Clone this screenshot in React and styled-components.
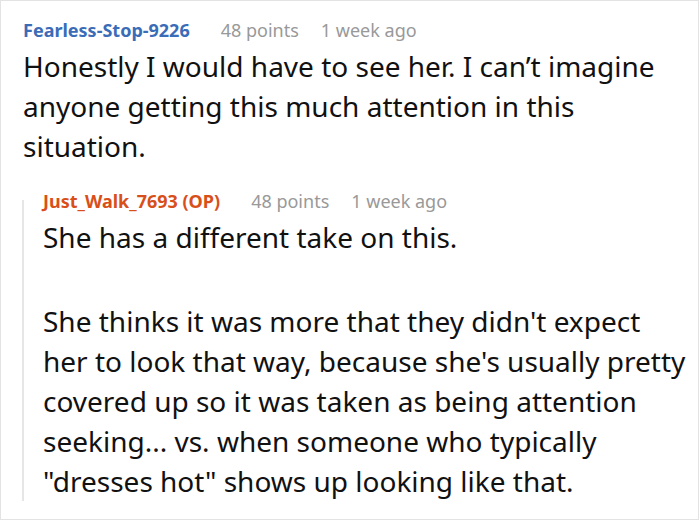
import styled, { createGlobalStyle } from "styled-components";

const GlobalStyle = createGlobalStyle`
  html, body {
    margin: 0;
    padding: 0;
    background: #fff;
  }
  * {
    box-sizing: border-box;
  }
`;

const Frame = styled.div`
  width: 699px;
  height: 520px;
  border: 1px solid #e3e3e3;
  padding: 17px 10px 0 22px;
  overflow: hidden;
  font-family: "Noto Sans", "Open Sans", sans-serif;
  background: #fff;
`;

const Comment = styled.div`
  display: flex;
  flex-direction: column;
`;

const Reply = styled.div`
  display: flex;
  flex-direction: column;
  margin-top: 23px;
  margin-left: -1px;
  padding-left: 21px;
  background: linear-gradient(#e6e6e6, #e6e6e6) no-repeat 0 11px / 2px calc(100% - 11px);
`;

const Meta = styled.div`
  display: flex;
  align-items: baseline;
  gap: 22px;
  font-size: 18px;
  line-height: 24px;
  color: #999;
  white-space: nowrap;
`;

const Author = styled.span`
  font-weight: 700;
  color: ${(props) => (props.$op ? "#d84f1a" : "#3b6cb7")};
  margin-right: 9px;
`;

const Body = styled.div`
  margin-top: 4px;
  font-size: 28px;
  line-height: 40px;
  color: #111;

  p {
    margin: 0;
  }
  p + p {
    margin-top: 44px;
  }
`;

export default function App() {
  return (
    <Frame>
      <GlobalStyle />
      <Comment>
        <Meta>
          <Author>Fearless-Stop-9226</Author>
          <span>48 points</span>
          <span>1 week ago</span>
        </Meta>
        <Body>
          <p>
            Honestly I would have to see her. I can’t imagine anyone getting
            this much attention in this situation.
          </p>
        </Body>
      </Comment>
      <Reply>
        <Meta>
          <Author $op>Just_Walk_7693 (OP)</Author>
          <span>48 points</span>
          <span>1 week ago</span>
        </Meta>
        <Body>
          <p>She has a different take on this.</p>
          <p>
            She thinks it was more that they didn't expect her to look that
            way, because she's usually pretty covered up so it was taken as
            being attention seeking... vs. when someone who typically "dresses
            hot" shows up looking like that.
          </p>
        </Body>
      </Reply>
    </Frame>
  );
}
